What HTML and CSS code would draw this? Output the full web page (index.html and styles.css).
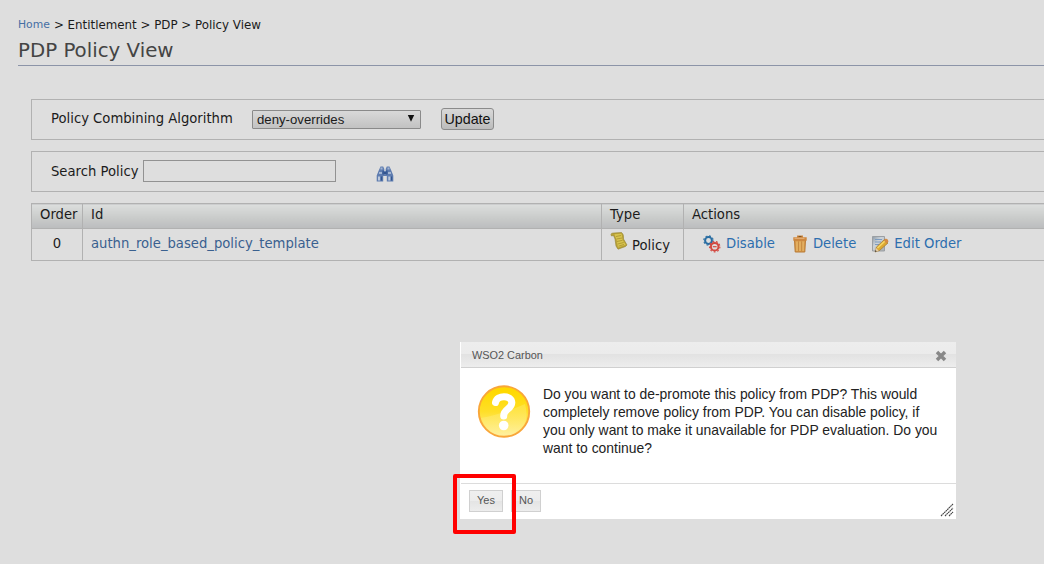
FILE: index.html
```
<!DOCTYPE html>
<html lang="en">
<head>
<meta charset="utf-8">
<title>PDP Policy View</title>
<link rel="stylesheet" href="styles.css">
</head>
<body>
<nav class="breadcrumb"><a href="#">Home</a><span>&gt; Entitlement &gt; PDP &gt; Policy View</span></nav>
<h1>PDP Policy View</h1>
<main>
  <section class="panel algorithm">
    <span class="label">Policy Combining Algorithm</span>
    <div class="select"><span>deny-overrides</span><svg width="8" height="7" viewBox="0 0 8 7"><path d="M.8 0h6.4L4 6.700z" fill="#111"/></svg></div>
    <button class="update">Update</button>
  </section>
  <section class="panel search">
    <span class="label">Search Policy</span>
    <input type="text" class="field">
    <svg class="binoculars" width="18" height="16" viewBox="0 0 18 16">
      <path d="M4.500.5h2.700L8.300 3v2h1.400V3l1.100-2.500h2.700L15.500 5l1.800 4.500v6h-6.500V10H7.200v5.500H.7v-6L2.500 5z" fill="#5f7db0"/>
      <path d="M4.500 1.500h2v2h-2zM11.500 1.500h2v2h-2zM3 6h3v2H3zM12 6h3v2h-3z" fill="#a3b6d4"/>
      <path d="M2 10.500h2v4H2zM12.300 10.500h2v4h-2z" fill="#bdc9dc"/>
      <path d="M5 10.500h1.200v4H5zM15 10.500h1.200v4H15zM6.500 4.500h1.300v4H6.500zM10.200 4.500h1.300v4h-1.300zM8 6h2v2H8z" fill="#31548f"/>
    </svg>
  </section>
  <table class="policies">
    <colgroup><col class="c-order"><col class="c-id"><col class="c-type"><col></colgroup>
    <thead><tr><th>Order</th><th>Id</th><th>Type</th><th>Actions</th></tr></thead>
    <tbody><tr>
      <td class="order">0</td>
      <td><a class="policy-link" href="#">authn_role_based_policy_template</a></td>
      <td><div class="type">
        <svg width="18" height="18" viewBox="0 0 18 18">
          <path d="M1 2.500Q1 .8 4 1L11.500.5Q14 2 13.500 7L17 13 15.500 14.500 8 17.200 6 14 5 7 3.500 3.500 1.500 4z" fill="#b8a238" stroke="#94822c" stroke-width=".6"/>
          <path d="M4.500 2.300 11.500 1.800 12.500 8 15.800 12.800 8 15.600 6.700 8z" fill="#d8c44f"/>
          <path d="M6 4.500 11 3.500M6.500 7l5.500-1M7 9.500l5.500-1.200M7.700 12l6-1.500M8.500 14.200l5.500-1.700" stroke="#a8922f" stroke-width=".8"/>
        </svg><span>Policy</span></div></td>
      <td><div class="actions">
        <a class="action" href="#"><svg width="18" height="18" viewBox="0 0 18 18" fill="none">
          <circle cx="5.500" cy="5.500" r="3.400" stroke="#286da2" stroke-width="2"/>
          <circle cx="5.500" cy="5.500" r="4.700" stroke="#286da2" stroke-width="1.100" stroke-dasharray="1.850"/>
          <circle cx="11.700" cy="11.700" r="3.800" stroke="#d34840" stroke-width="2"/>
          <circle cx="11.700" cy="11.700" r="5.200" stroke="#d34840" stroke-width="1.100" stroke-dasharray="1.800"/>
          <path d="M9.800 11.700h3.800" stroke="#d34840" stroke-width="1.200"/>
        </svg><span>Disable</span></a>
        <a class="action trash" href="#"><svg width="16" height="18" viewBox="0 0 16 18">
          <path d="M2.500 5h11l-.7 12H3.200z" fill="#d99a4c" stroke="#b87a35"/>
          <path d="M5 6.500v9.500M8 6.500v9.500M11 6.500v9.500" stroke="#e6b769" stroke-width="1.400"/>
          <path d="M6.500 6.500v9.500M9.700 6.500v9.500" stroke="#bd843e" stroke-width=".7"/>
          <path d="M5 2.200V.5h6v1.700h3.700v3.500H1.300V2.200z" fill="#ce8840"/><path d="M2.500 3.300h10" stroke="#e8b47c"/>
          <path d="M6.500 1.500h3" stroke="#7d5425"/>
        </svg><span>Delete</span></a>
        <a class="action edit" href="#"><svg width="18" height="18" viewBox="0 0 18 18">
          <defs><linearGradient id="paper" x2="1" y2="1"><stop stop-color="#8d9aa7"/><stop offset=".4" stop-color="#cdd3d8"/><stop offset="1" stop-color="#a8aeb3"/></linearGradient></defs>
          <path d="M1.500 1.500h12v14.500h-12z" fill="url(#paper)" stroke="#9b9fa3"/>
          <path d="M4 4.500h7M4 7H10M4 9.500H8" stroke="#7d9cc0" stroke-width="1.200"/>
          <path d="M4 17 5.500 12l8-7.500L17 8l-8.500 7.500z" fill="#dda82f" stroke="#9c7630" stroke-width=".7"/>
          <path d="m6.500 13 8-7.500" stroke="#f5d765" stroke-width="1.600"/>
          <path d="m12.800 5.200 2-1.600q2.500.5 2.700 3l-2 2z" fill="#d58a42"/>
          <path d="m4 17 1-4.200 2.800 3.200z" fill="#e6cda7"/><path d="m4 17 .5-2 1.200 1.400z" fill="#333"/>
        </svg><span>Edit Order</span></a>
      </div></td>
    </tr></tbody>
  </table>
</main>

<div class="dialog" role="dialog">
  <header class="dialog-title"><span>WSO2 Carbon</span>
    <svg width="12" height="12" viewBox="0 0 12 12"><path d="m2 2 8 8m0-8-8 8" stroke="#888" stroke-width="3.500"/></svg>
  </header>
  <div class="dialog-body">
    <svg width="54" height="54" viewBox="0 0 54 54">
      <defs><linearGradient id="sun" x2="0" y2="1"><stop offset=".1" stop-color="#ffd900"/><stop offset=".5" stop-color="#ffdf28"/><stop offset="1" stop-color="#fff0a0"/></linearGradient>
      <linearGradient id="shine" x2="0" y2="1"><stop stop-color="#ffe652"/><stop offset="1" stop-color="#fff3a8" stop-opacity=".5"/></linearGradient></defs>
      <circle cx="27" cy="26.500" r="25.200" fill="url(#sun)" stroke="#f9a63a" stroke-width="1.900"/>
      <path d="M4 33Q23 30 48 19Q54 40 37 48Q13 56 4 33z" fill="url(#shine)" opacity=".65"/>
      <path d="M18.500 17.500C20 9.500 34.500 10 34.800 17.500C35 24 26.300 24 26.700 31" fill="none" stroke="#fff" stroke-width="7" stroke-linecap="round"/>
      <circle cx="26.700" cy="40.500" r="4.800" fill="#fff"/>
    </svg>
    <p>Do you want to de-promote this policy from PDP? This would<br>completely remove policy from PDP. You can disable policy, if<br>you only want to make it unavailable for PDP evaluation. Do you<br>want to continue?</p>
  </div>
  <footer class="dialog-footer"><button class="yes">Yes</button><button class="no">No</button>
    <svg class="grip" width="14" height="14" viewBox="0 0 14 14"><path d="M1 13 13 1M5 13l8-8M9 13l4-4" stroke="#444" stroke-width="1.100" stroke-dasharray="1.800 .4"/></svg>
  </footer>
</div>
<div class="highlight"></div>
</body>
</html>
```
FILE: styles.css
```
* { box-sizing: border-box; }
body {
  margin: 0;
  padding: 17px 0 0 18px;
  height: 564px;
  overflow: hidden;
  position: relative;
  background: #dedede;
  color: #1b1b1b;
  font: 13.2px/16px "DejaVu Sans", sans-serif;
}
svg { display: block; flex: none; }
a { text-decoration: none; }
.breadcrumb { display: flex; gap: 4px; height: 17px; font-size: 11.85px; line-height: 17px; }
.breadcrumb a { font-size: 10.8px; line-height: 16px; color: #456fa4; }
h1 {
  margin: 0;
  height: 32px;
  font-size: 19.8px;
  font-weight: 400;
  line-height: 34px;
  color: #444;
  border-bottom: 1px solid #8c94a8;
}
main { padding: 33px 0 0 13px; }
.panel {
  display: flex;
  align-items: flex-start;
  height: 41px;
  margin-bottom: 11px;
  padding-left: 19px;
  border: 1px solid #b1b1b1;
  border-right: 0;
}
.algorithm .label { width: 201px; padding-top: 11px; }
.select {
  display: flex;
  align-items: center;
  justify-content: space-between;
  width: 169px;
  height: 19px;
  margin: 10px 20px 0 0;
  padding: 0 5px 0 4px;
  border: 1px solid #8a8a8a;
  border-radius: 1px;
  background: linear-gradient(#d9d9d9, #c2c2c2);
  font: 13.2px "Liberation Sans", sans-serif;
}
.select svg { margin-bottom: 2px; }
.update {
  width: 53px;
  height: 22px;
  margin-top: 8px;
  padding: 0;
  border: 1px solid #8b8b8b;
  border-radius: 3px;
  background: linear-gradient(#d9d9d9, #bcbcbc);
  color: #111;
  font: 14.3px "Liberation Sans", sans-serif;
}
.search .label { width: 92px; padding-top: 12px; }
.field { width: 193px; height: 22px; margin-top: 8px; border: 1px solid #929292; background: #dedede; }
.binoculars { margin: 14px 0 0 40px; }
.policies { width: 1013px; border-collapse: collapse; table-layout: fixed; }
.c-order { width: 51px; }
.c-id { width: 519px; }
.c-type { width: 82px; }
th, td { border: 1px solid #b1b1b1; padding: 0 8px; text-align: left; font-weight: 400; }
th:last-child, td:last-child { border-right: 0; }
th { height: 25px; padding-bottom: 2px; background: linear-gradient(#dcdedd, #c8cac9 60%, #bbbcbe); }
td { height: 32px; padding-bottom: 2px; }
.order { text-align: center; }
.policy-link { color: #39608f; }
.type { display: flex; gap: 4px; }
.type svg { margin-top: -1px; }
.type span { padding-top: 5px; }
.actions { display: flex; padding: 1px 0 0 11px; }
.action { display: flex; align-items: center; gap: 5px; color: #2d6eae; }
.trash { margin-left: 17px; }
.edit { margin-left: 15px; }
.dialog {
  position: absolute;
  left: 460px;
  top: 342px;
  width: 496px;
  height: 177px;
  padding-left: 1px;
  background: #fff;
  font-family: "Liberation Sans", sans-serif;
}
.dialog-title {
  display: flex;
  align-items: center;
  justify-content: space-between;
  height: 26px;
  padding: 0 9px 0 11px;
  border-bottom: 1px solid #d0d0d0;
  background: linear-gradient(#ededed, #ebebeb 48%, #e2e2e2 50%, #ededed);
  color: #555;
  font-size: 10.9px;
}
.dialog-title svg { margin-top: 3px; }
.dialog-body { display: flex; gap: 12px; height: 115px; padding: 17px 0 0 16px; color: #222; }
.dialog-body p { margin: 0; font-size: 13.9px; line-height: 18px; white-space: nowrap; }
.dialog-footer { display: flex; height: 36px; padding: 6px 0 0 8px; border-top: 1px solid #dcdcdc; }
.dialog-footer button {
  height: 22px;
  padding: 0 0 2px;
  border: 1px solid #d0d0d0;
  background: linear-gradient(#efefef, #ececec 48%, #e4e4e4 50%, #ededed);
  color: #555;
  font: 11px "Liberation Sans", sans-serif;
}
.dialog-footer .yes { width: 34px; margin-right: 8px; }
.dialog-footer .no { width: 30px; }
.grip { margin: 13px 2px 0 auto; }
.highlight {
  position: absolute;
  left: 453px;
  top: 474px;
  width: 63px;
  height: 60px;
  border: 4px solid #f00;
  border-radius: 2px;
}
```
